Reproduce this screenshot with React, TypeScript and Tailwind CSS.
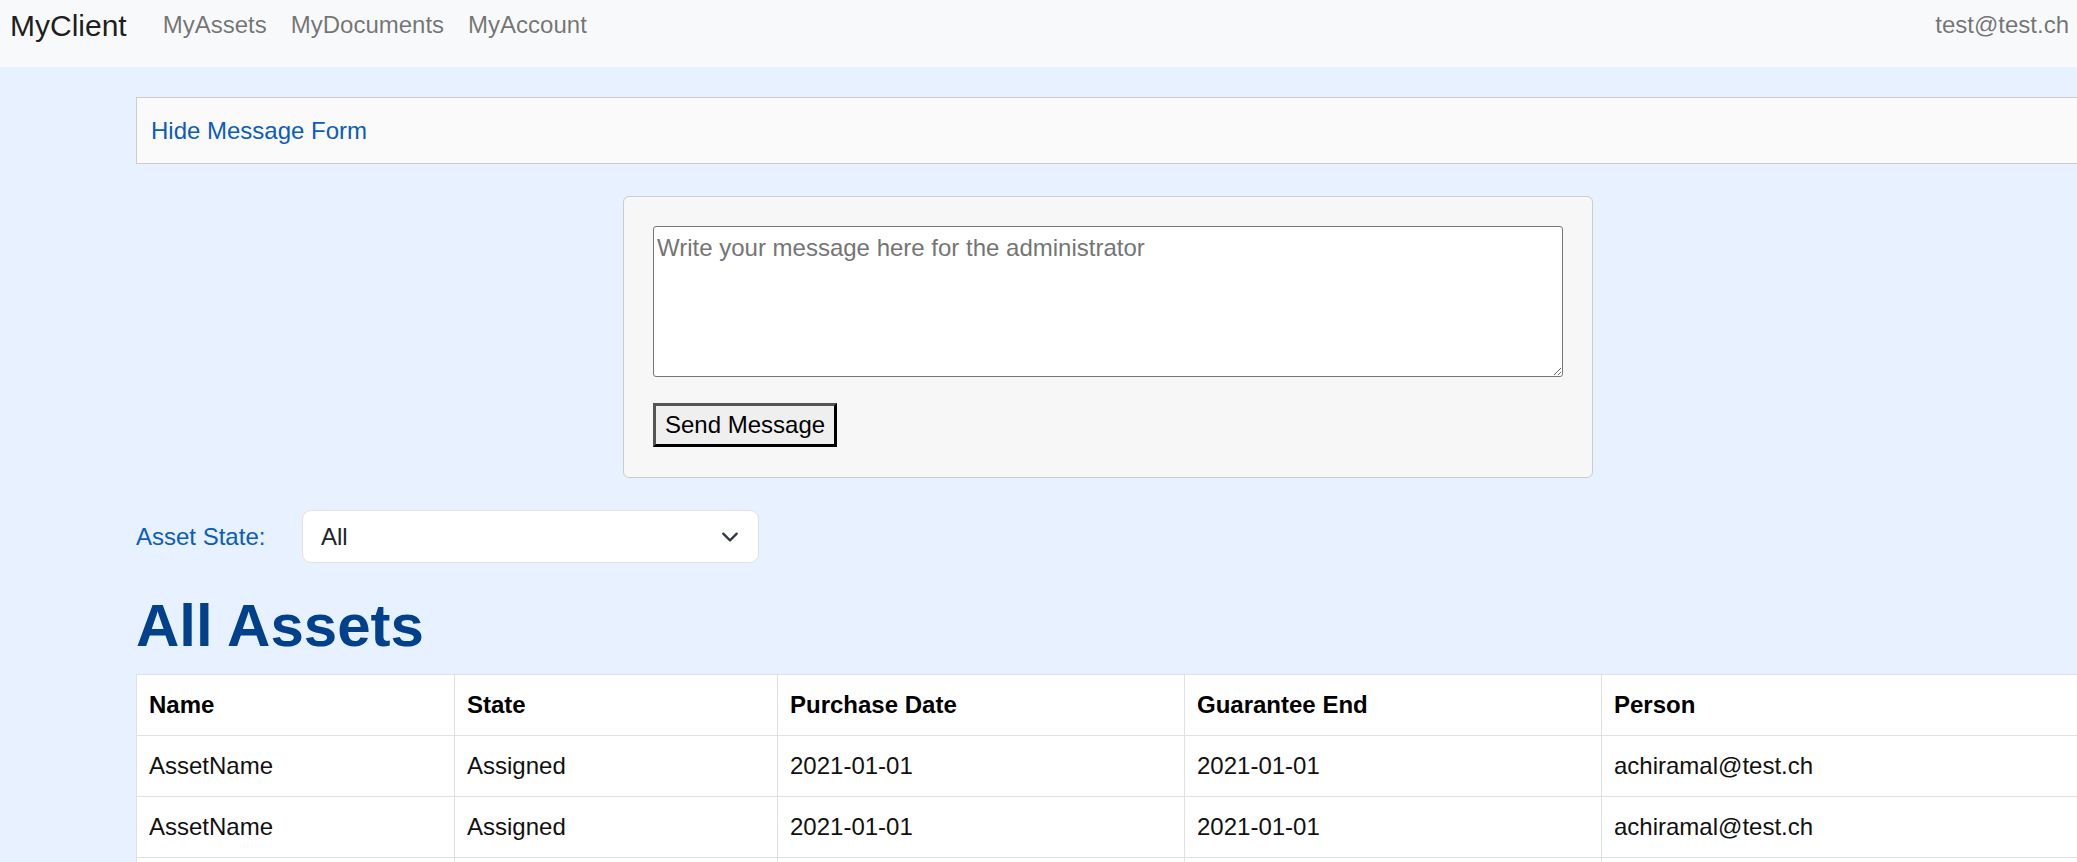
import React from 'react';

const assets = [
  { name: 'AssetName', state: 'Assigned', purchase: '2021-01-01', guarantee: '2021-01-01', person: 'achiramal@test.ch' },
  { name: 'AssetName', state: 'Assigned', purchase: '2021-01-01', guarantee: '2021-01-01', person: 'achiramal@test.ch' },
];

function NavBar() {
  return (
    <nav className="flex h-[67px] items-start bg-[#f8f9fa]">
      <a className="ml-[10px] mr-[24px] mt-[3px] text-[30px] leading-[45px] text-black/90">MyClient</a>
      <a className="mt-[7px] px-[12px] text-[24px] leading-[36px] text-black/55">MyAssets</a>
      <a className="mt-[7px] px-[12px] text-[24px] leading-[36px] text-black/55">MyDocuments</a>
      <a className="mt-[7px] px-[12px] text-[24px] leading-[36px] text-black/55">MyAccount</a>
      <span className="ml-auto mr-[8px] mt-[7px] text-[24px] leading-[36px] text-black/55">test@test.ch</span>
    </nav>
  );
}

function MessageForm() {
  return (
    <div className="mx-auto mt-[32px] w-[970px] rounded-[6px] border border-[#cccccc] bg-[#f7f7f7] px-[29px] pb-[30px] pt-[29px]">
      <textarea
        placeholder="Write your message here for the administrator"
        className="block h-[151px] w-full rounded-[3px] border border-[#767676] bg-white p-[3px] text-[24px] leading-[36px] text-black placeholder:text-[#757575] outline-none"
      />
      <button className="mt-[26px] h-[44px] border-[3px] border-b-black border-l-[#555555] border-r-black border-t-[#555555] bg-[#efefef] px-[9px] text-[24px] text-black">
        Send Message
      </button>
    </div>
  );
}

function StateFilter() {
  return (
    <div className="mt-[32px] flex items-center">
      <label className="w-[166px] text-[24px] leading-[36px] text-[#0b5cc0]">Asset State:</label>
      <div className="relative w-[457px]">
        <select className="h-[53px] w-full appearance-none rounded-[9px] border border-[#dee2e6] bg-white pl-[18px] text-[24px] text-[#212529] outline-none">
          <option>All</option>
          <option>Assigned</option>
          <option>Available</option>
        </select>
        <svg
          className="pointer-events-none absolute right-[20px] top-1/2 h-[18px] w-[18px] -translate-y-1/2"
          viewBox="0 0 16 16"
          fill="none"
          stroke="#343a40"
          strokeWidth="2"
          strokeLinecap="round"
          strokeLinejoin="round"
        >
          <path d="m2 5 6 6 6-6" />
        </svg>
      </div>
    </div>
  );
}

function AssetTable() {
  const cell = 'border border-[#dee2e6] px-[12px] py-[12px] text-left text-[24px] leading-[36px]';
  return (
    <table className="w-full table-fixed border-collapse bg-white">
      <colgroup>
        <col className="w-[318px]" />
        <col className="w-[323px]" />
        <col className="w-[407px]" />
        <col className="w-[417px]" />
        <col />
      </colgroup>
      <thead>
        <tr className="text-black">
          <th className={`${cell} font-bold`}>Name</th>
          <th className={`${cell} font-bold`}>State</th>
          <th className={`${cell} font-bold`}>Purchase Date</th>
          <th className={`${cell} font-bold`}>Guarantee End</th>
          <th className={`${cell} font-bold`}>Person</th>
        </tr>
      </thead>
      <tbody>
        {assets.map((a, i) => (
          <tr key={i} className="text-[#111111]">
            <td className={cell}>{a.name}</td>
            <td className={cell}>{a.state}</td>
            <td className={cell}>{a.purchase}</td>
            <td className={cell}>{a.guarantee}</td>
            <td className={cell}>{a.person}</td>
          </tr>
        ))}
        {/* next row starts right at the fold */}
        <tr className="h-[61px]">
          <td className="border border-[#dee2e6]" />
          <td className="border border-[#dee2e6]" />
          <td className="border border-[#dee2e6]" />
          <td className="border border-[#dee2e6]" />
          <td className="border border-[#dee2e6]" />
        </tr>
      </tbody>
    </table>
  );
}

export default function App() {
  return (
    <div className="h-[862px] w-full overflow-hidden bg-[#e7f1ff] font-['Liberation_Sans',Arial,sans-serif]">
      <NavBar />
      <main className="ml-[136px] w-[1944px]">
        {/* Toggle bar */}
        <div className="mt-[30px] h-[67px] border border-[#cccccc] bg-[#fafafa] px-[14px] pt-[15px]">
          <a className="text-[24px] leading-[36px] text-[#0b5cc0]">Hide Message Form</a>
        </div>

        <MessageForm />
        <StateFilter />

        <h1 className="mb-[12px] mt-[27px] text-[60px] font-bold leading-[72px] text-[#01408a]">All Assets</h1>

        <AssetTable />
      </main>
    </div>
  );
}
